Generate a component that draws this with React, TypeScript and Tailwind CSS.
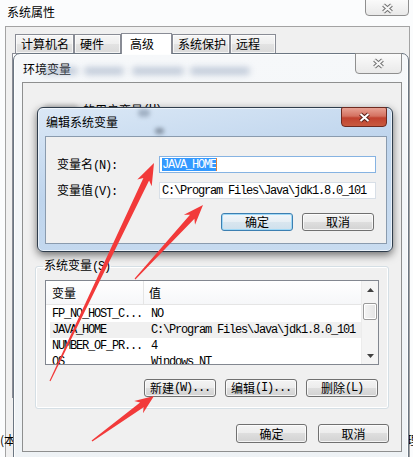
import clsx from "clsx"
import type { ReactNode } from "react"

const mono = "font-['Liberation_Mono',monospace] tracking-[-1.2px]"

type Arrow = { x1: number; y1: number; x2: number; y2: number; head: number; barb: number; neck: number }

const arrows: Arrow[] = [
  { x1: 50, y1: 381, x2: 154, y2: 163, head: 22, barb: 8, neck: 3.2 },
  { x1: 135, y1: 279, x2: 203, y2: 205, head: 20, barb: 7.5, neck: 3 },
  { x1: 92, y1: 441, x2: 154, y2: 396, head: 19, barb: 7.5, neck: 3 },
]

function arrowPoints(a: Arrow) {
  const dx = a.x2 - a.x1
  const dy = a.y2 - a.y1
  const len = Math.hypot(dx, dy)
  const ux = dx / len
  const uy = dy / len
  const p = (t: number, w: number) => `${(a.x1 + ux * t - uy * w).toFixed(1)},${(a.y1 + uy * t + ux * w).toFixed(1)}`
  const b = len - a.head
  return [p(0, 0.6), p(b + 4, a.neck), p(b, a.barb), p(len, 0), p(b, -a.barb), p(b + 4, -a.neck), p(0, -0.6)].join(" ")
}

function CloseX({ red }: { red?: boolean }) {
  return (
    <svg width="13" height="11" viewBox="0 0 13 11">
      <path d="M2.5 2L10.5 9M10.5 2L2.5 9" stroke={red ? "#5b2119" : "#707070"} strokeWidth="4" />
      <path d="M2.5 2L10.5 9M10.5 2L2.5 9" stroke={red ? "#ffffff" : "#f6f6f6"} strokeWidth="2" />
    </svg>
  )
}

function Btn({ children, focused, wide }: { children: ReactNode; focused?: boolean; wide?: boolean }) {
  return (
    <div
      className={clsx(
        "flex items-center justify-center rounded-[3px] border text-[12px] leading-none",
        wide ? "h-[18px] w-[72px]" : "h-[19px] w-[71px]",
        focused
          ? "border-[#3c7fb1] bg-[linear-gradient(#f1f6fa,#e6eef4_50%,#d9e6ef_50%,#cfe0ec)] shadow-[inset_0_0_0_1px_#9fd8f6]"
          : "border-[#707070] bg-[linear-gradient(#f4f4f4,#ececec_50%,#dedede_50%,#d2d2d2)] shadow-[inset_0_0_0_1px_rgba(255,255,255,0.75)]"
      )}
    >
      {children}
    </div>
  )
}

function Tab({ label, w, active }: { label: string; w: string; active?: boolean }) {
  return (
    <div
      className={clsx(
        "flex items-center border border-b-0 border-[#898c95] text-[12px] leading-none",
        w,
        active
          ? "z-10 -mb-px h-[21px] bg-white pl-[8px]"
          : "h-[19px] bg-[linear-gradient(#f6f6f6,#eeeeee_50%,#e3e3e3_50%,#dadada)] pl-[5px] shadow-[inset_0_0_0_1px_rgba(255,255,255,0.7)]"
      )}
    >
      {label}
    </div>
  )
}

const rows = [
  { name: "FP_NO_HOST_C...", value: "NO" },
  { name: "JAVA_HOME", value: "C:\\Program Files\\Java\\jdk1.8.0_101", selected: true },
  { name: "NUMBER_OF_PR...", value: "4" },
  { name: "OS", value: "Windows_NT" },
]

// blurred patches left by the screenshot's mosaic tool
const smudges = [
  { l: "left-[20px]", w: "w-[36px]" },
  { l: "left-[62px]", w: "w-[40px]" },
  { l: "left-[110px]", w: "w-[52px]" },
  { l: "left-[168px]", w: "w-[60px]" },
]

export default function App() {
  return (
    <div className="relative h-[457px] w-[413px] overflow-hidden bg-[#fbfcfd] font-['Noto_Sans_CJK_SC','Noto_Sans',sans-serif] text-black">
      {/* 系统属性 */}
      <div className="pl-[7px] pt-[5px] text-[12px] leading-[14px]">系统属性</div>
      <div className="absolute right-[4px] top-[-2px] flex h-[18px] w-[44px] items-center justify-center rounded-b-[4px] border border-[#8f8f8f] bg-[linear-gradient(#fbfbfb,#e9e9e9)] pt-[2px]">
        <CloseX />
      </div>
      <div className="absolute bottom-[-2px] left-[5px] right-[3px] top-[26px] flex flex-col border border-[#a3a3a3] bg-[#f0f0f0] pl-[6px] pr-[6px] pt-[6px]">
        <div className="ml-[3px] flex h-[20px] items-end">
          <Tab label="计算机名" w="w-[59px]" />
          <Tab label="硬件" w="w-[47px]" />
          <Tab label="高级" w="w-[51px]" active />
          <Tab label="系统保护" w="w-[58px]" />
          <Tab label="远程" w="w-[46px]" />
        </div>
        <div className="h-[345px] border border-[#898c95] bg-white" />
        <div className="-ml-[12px] -mr-[16px] mt-[35px] flex justify-between text-[12px] leading-[14px]">
          <span>(本地计算机)</span>
          <span>管理</span>
        </div>
      </div>

      {/* 环境变量 */}
      <div className="absolute bottom-[-6px] left-[13px] right-[4px] top-[53px] flex flex-col rounded-t-[7px] border border-[#6b7682] bg-[linear-gradient(#f6f8fa,#eef2f5)] pl-[8px] pr-[6px] shadow-[inset_0_0_0_1px_rgba(255,255,255,0.8)]">
        <div className="relative flex h-[28px] items-center pl-[1px] pt-[2px] text-[12px] leading-none">
          环境变量
          {smudges.map((s) => (
            <span key={s.l} className={clsx("absolute top-[13px] h-[8px] rounded-full bg-[#8fa0bb] opacity-50 blur-[3px]", s.l, s.w)} />
          ))}
        </div>
        <div className="absolute right-[6px] top-[-1px] flex h-[21px] w-[47px] items-center justify-center rounded-b-[4px] border border-[#8f8f8f] bg-[linear-gradient(#fbfbfb,#e9e9e9)]">
          <CloseX />
        </div>
        <div className="mb-[10px] flex flex-1 flex-col border border-[#8e8f8f] bg-[#f0f0f0]">
          <div className="flex items-center pl-[20px] pt-[21px] text-[12px] leading-[12px]">
            <span className="mr-[4px] h-[10px] w-[36px] rounded-full bg-[#707070] opacity-40 blur-[2px]" />
            <span>的用户变量</span>
            <span className={mono}>(U)</span>
          </div>
          <div className="h-[142px]" />
          <fieldset className="mx-[12px] rounded-[3px] border border-[#d5dfe5] shadow-[inset_0_0_0_1px_#ffffff]">
            <legend className="ml-[7px] px-[1px] text-[12px] leading-[14px]">
              系统变量<span className={mono}>(S)</span>
            </legend>
            <div className="px-[9px] pb-[11px] pt-[6px]">
              <div className="flex h-[85px] overflow-hidden border border-[#828790] bg-white">
                <div className="flex flex-1 flex-col">
                  <div className="flex h-[24px] shrink-0 border-b border-[#e5e5e5] bg-[linear-gradient(#ffffff,#f6f7f9)] text-[12px] leading-none">
                    <div className="flex w-[98px] items-center border-r border-[#e5e5e5] pl-[6px]">变量</div>
                    <div className="flex items-center pl-[5px]">值</div>
                  </div>
                  <div className="pt-[1px]">
                    {rows.map((r) => (
                      <div
                        key={r.name}
                        className={clsx("ml-[4px] flex h-[16px] items-center pl-[2px] text-[12px] leading-none", mono, r.selected && "bg-[#f0f0f0]")}
                      >
                        <span className="w-[99px] shrink-0 whitespace-nowrap">{r.name}</span>
                        <span className="whitespace-nowrap">{r.value}</span>
                      </div>
                    ))}
                  </div>
                </div>
                <div className="flex w-[17px] shrink-0 flex-col border-l border-[#ececec] bg-[#f4f4f4]">
                  <div className="flex h-[17px] items-center justify-center">
                    <svg width="7" height="4" viewBox="0 0 7 4">
                      <path d="M0 4L3.5 0L7 4Z" fill="#404040" />
                    </svg>
                  </div>
                  <div className="mx-[1px] mt-[5px] h-[17px] rounded-[2px] border border-[#9a9a9a] bg-[linear-gradient(90deg,#f4f4f4,#e4e4e4)] shadow-[inset_0_0_0_1px_#ffffff]" />
                  <div className="flex-1" />
                  <div className="flex h-[17px] items-center justify-center">
                    <svg width="7" height="4" viewBox="0 0 7 4">
                      <path d="M0 0L3.5 4L7 0Z" fill="#404040" />
                    </svg>
                  </div>
                </div>
              </div>
              <div className="mt-[14px] flex justify-end gap-[9px] pr-[1px]">
                <Btn wide>
                  新建<span className={mono}>(W)...</span>
                </Btn>
                <Btn wide>
                  编辑<span className={mono}>(I)...</span>
                </Btn>
                <Btn wide>
                  删除<span className={mono}>(L)</span>
                </Btn>
              </div>
            </div>
          </fieldset>
          <div className="mt-[15px] flex justify-end gap-[11px] pr-[12px]">
            <Btn>确定</Btn>
            <Btn>取消</Btn>
          </div>
        </div>
      </div>

      {/* 编辑系统变量 */}
      <div className="absolute left-[37px] top-[107px] flex h-[145px] w-[356px] flex-col rounded-[6px] border border-[#2f3d4c] bg-[linear-gradient(170deg,#dbe8f6,#bfd5ed_45%,#c9dcf0)] pl-[7px] pr-[5px] shadow-[0_3px_8px_rgba(0,0,0,0.55),inset_0_0_0_1px_rgba(255,255,255,0.6)]">
        <div className="flex h-[28px] items-center pl-[1px] text-[12px] leading-none">编辑系统变量</div>
        <div className="absolute right-[5px] top-[-1px] flex h-[20px] w-[46px] items-center justify-center rounded-[4px] rounded-t-[2px] border border-[#6e2a20] bg-[linear-gradient(#e8a193,#d47261_45%,#c1422f_55%,#c85a40)]">
          <CloseX red />
        </div>
        <span className="absolute left-[100px] top-[1px] h-[8px] w-[12px] rounded-full bg-[#8090a4] opacity-60 blur-[2px]" />
        <span className="absolute left-[117px] top-[20px] h-[6px] w-[9px] rounded-full bg-[#505c6c] opacity-60 blur-[2px]" />
        <div className="mb-[7px] flex flex-1 flex-col border border-[#8a9bae] bg-[#f0f0f0] pl-[11px] pr-[10px] pt-[19px]">
          <div className="flex h-[17px] items-center">
            <div className="w-[102px] text-[12px] leading-none">
              变量名<span className={mono}>(N):</span>
            </div>
            <div className="flex h-[17px] flex-1 items-center border border-[#86b3e2] bg-white pl-[2px]">
              <span className={clsx("flex h-[13px] items-center bg-[#3399ff] text-[12px] leading-none text-white", mono)}>JAVA_HOME</span>
              <span className="h-[13px] w-px bg-[#e0803a]" />
            </div>
          </div>
          <div className="mt-[9px] flex h-[17px] items-center">
            <div className="w-[102px] text-[12px] leading-none">
              变量值<span className={mono}>(V):</span>
            </div>
            <div className={clsx("flex h-[17px] flex-1 items-center border border-[#d8dfe7] bg-white pl-[2px] text-[12px] leading-none", mono)}>
              {"C:\\Program Files\\Java\\jdk1.8.0_101"}
            </div>
          </div>
          <div className="mt-[14px] flex justify-end gap-[9px] pr-[2px]">
            <Btn focused wide>
              确定
            </Btn>
            <Btn wide>取消</Btn>
          </div>
        </div>
      </div>

      {/* red arrows */}
      <svg className="pointer-events-none absolute inset-0" width="413" height="457" viewBox="0 0 413 457">
        {arrows.map((a, i) => (
          <polygon key={i} points={arrowPoints(a)} fill="#f23a3a" />
        ))}
      </svg>
    </div>
  )
}
